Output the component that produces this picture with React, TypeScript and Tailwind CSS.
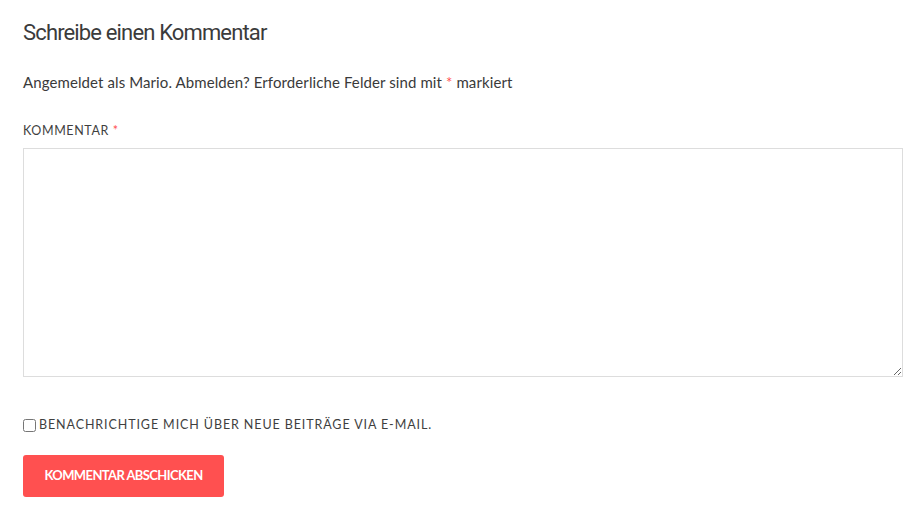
export default function App() {
  return (
    <div className="min-h-screen bg-white px-[23px] pt-[18px] font-['Lato',sans-serif] text-[#3a3a3a]">
      <h3 className="font-['Roboto',sans-serif] text-[22px] leading-[30px] tracking-[-0.85px] text-[#3b3b3b]">
        Schreibe einen Kommentar
      </h3>

      <p className="mt-[23px] text-[15px] leading-[22px] tracking-[0.1px]">
        Angemeldet als Mario. Abmelden? Erforderliche Felder sind mit{' '}
        <span className="text-[#ff4f4f]">*</span> markiert
      </p>

      <form className="mt-[30px]" onSubmit={(e) => e.preventDefault()}>
        <label className="block text-[12.5px] uppercase leading-[16px] tracking-[0.6px] text-[#3f3f3f]">
          Kommentar <span className="text-[#ff4f4f]">*</span>
        </label>
        <textarea className="mt-[9px] block h-[229px] w-[880px] border border-[#dddddd] bg-white outline-none" />

        <div className="mt-[40px] flex items-center">
          <input type="checkbox" className="m-0 h-[13px] w-[13px]" />
          <span className="ml-[3px] text-[12.5px] uppercase leading-[16px] tracking-[0.9px] text-[#3f3f3f]">
            Benachrichtige mich über neue Beiträge via E-Mail.
          </span>
        </div>

        <button
          type="submit"
          className="mt-[22px] flex h-[42px] w-[201px] items-center justify-center rounded-[3px] bg-[#ff5050] text-[13px] font-bold uppercase tracking-[-0.6px] text-white"
        >
          Kommentar abschicken
        </button>
      </form>
    </div>
  )
}
